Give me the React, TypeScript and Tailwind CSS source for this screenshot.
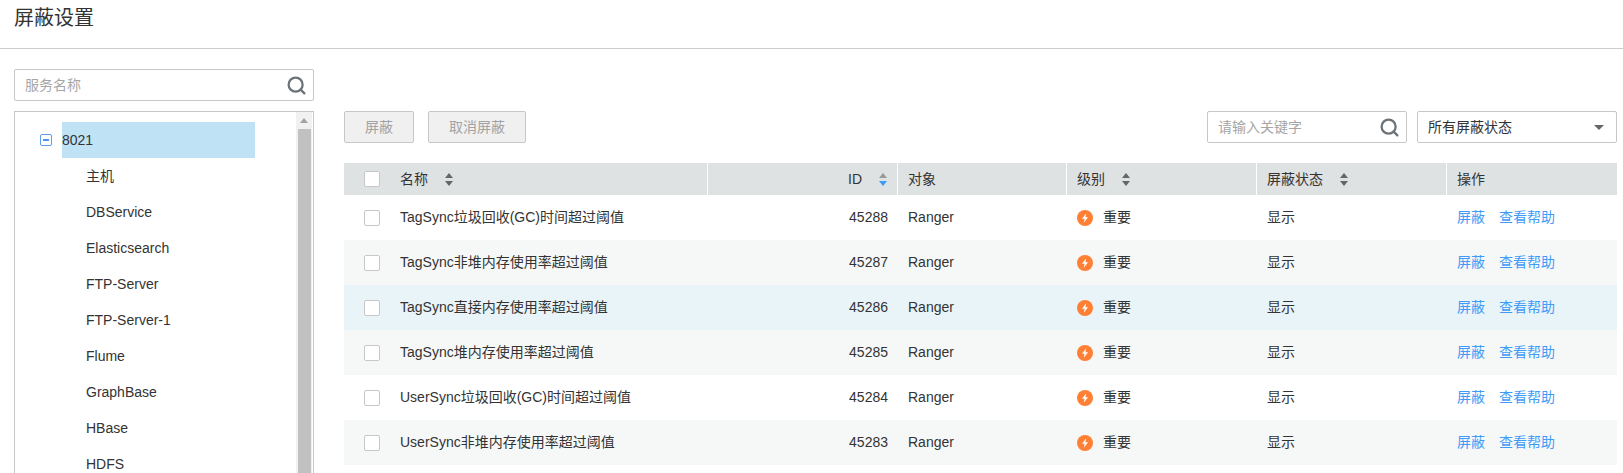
import { Search } from 'lucide-react';

const treeItems = ['主机', 'DBService', 'Elasticsearch', 'FTP-Server', 'FTP-Server-1', 'Flume', 'GraphBase', 'HBase', 'HDFS'];

const rows = [
  { name: 'TagSync垃圾回收(GC)时间超过阈值', id: 45288, bg: 'bg-white' },
  { name: 'TagSync非堆内存使用率超过阈值', id: 45287, bg: 'bg-[#f6f8f8]' },
  { name: 'TagSync直接内存使用率超过阈值', id: 45286, bg: 'bg-[#e9f4f9]' },
  { name: 'TagSync堆内存使用率超过阈值', id: 45285, bg: 'bg-[#f6f8f8]' },
  { name: 'UserSync垃圾回收(GC)时间超过阈值', id: 45284, bg: 'bg-white' },
  { name: 'UserSync非堆内存使用率超过阈值', id: 45283, bg: 'bg-[#f6f8f8]' }
];

function SortIcon({ active }: { active?: boolean }) {
  return (
    <svg width="8" height="13" viewBox="0 0 8 13" className="shrink-0">
      <path d="M4 0L8 5H0z" fill={active ? '#999999' : '#666666'} />
      <path d="M4 13L0 8h8z" fill={active ? '#3f9bf7' : '#666666'} />
    </svg>
  );
}

function Checkbox() {
  return <span className="block w-4 h-4 bg-white border border-[#c7c7c7] rounded-[2px]" />;
}

function BoltIcon() {
  return (
    <svg width="16" height="16" viewBox="0 0 16 16" className="shrink-0">
      <circle cx="8" cy="8" r="8" fill="#ff8034" />
      <path d="M9.2 3.2L5 8.8h2.6l-.8 4 4.2-5.6H8.4z" fill="#ffffff" />
    </svg>
  );
}

export default function App() {
  return (
    <div className="w-[1623px] h-[473px] overflow-hidden bg-white text-[14px] text-[#333333] font-['Liberation_Sans','Noto_Sans_CJK_SC',sans-serif]">
      {/* Title */}
      <div className="h-[49px] border-b border-[#cccccc] pl-[14px] pt-[3px] text-[20px] leading-[30px]">屏蔽设置</div>

      <div className="flex pt-5 pl-[14px] pr-[6px]">
        {/* Left tree */}
        <div className="w-[300px] shrink-0">
          <div className="h-[32px] flex items-center justify-between pl-[10px] pr-[6px] border border-[#c7c7c7] rounded-[2px]">
            <span className="text-[#a6a6a6]">服务名称</span>
            <Search size={21} strokeWidth={2.6} className="text-[#6b7278]" />
          </div>
          <div className="mt-[10px] h-[400px] flex border border-[#c7c7c7]">
            <div className="flex-1 pt-[10px]">
              <div className="flex items-center pl-[25px] h-[36px]">
                <span className="w-3 h-3 mr-[10px] flex items-center justify-center border border-[#5b9df5] rounded-[2px]">
                  <span className="w-[6px] h-[2px] bg-[#4d94f2]" />
                </span>
                <span className="w-[193px] h-[36px] leading-[36px] bg-[#bfe2f5]">8021</span>
              </div>
              {treeItems.map((item) => (
                <div key={item} className="h-[36px] leading-[36px] pl-[71px]">{item}</div>
              ))}
            </div>
            <div className="w-[16px] bg-[#f1f1f1] flex flex-col items-end pr-px mr-px">
              <div className="w-full h-[17px] flex items-center justify-center">
                <span className="border-x-[4px] border-x-transparent border-b-[5px] border-b-[#a3a3a3]" />
              </div>
              <div className="flex-1 w-[13px] bg-[#c1c1c1]" />
            </div>
          </div>
        </div>

        {/* Right content */}
        <div className="flex-1 ml-[30px] pt-[42px]">
          <div className="flex items-center justify-between">
            <div className="flex gap-[14px]">
              <button className="h-[32px] w-[70px] bg-[#f0f0f0] border border-[#c7c7c7] rounded-[2px] text-[#a3a3a3]">屏蔽</button>
              <button className="h-[32px] w-[98px] bg-[#f0f0f0] border border-[#c7c7c7] rounded-[2px] text-[#a3a3a3]">取消屏蔽</button>
            </div>
            <div className="flex gap-[10px]">
              <div className="w-[200px] h-[32px] flex items-center justify-between pl-[10px] pr-[6px] border border-[#c7c7c7] rounded-[2px]">
                <span className="text-[#a6a6a6]">请输入关键字</span>
                <Search size={21} strokeWidth={2.6} className="text-[#6b7278]" />
              </div>
              <div className="w-[200px] h-[32px] flex items-center justify-between pl-[10px] pr-[12px] border border-[#c7c7c7] rounded-[2px]">
                <span>所有屏蔽状态</span>
                <span className="border-x-[5px] border-x-transparent border-t-[5px] border-t-[#666666]" />
              </div>
            </div>
          </div>

          {/* Table */}
          <div className="mt-5">
            <div className="flex h-[32px] items-center bg-[#dfe2e3]">
              <div className="w-[364px] h-full flex items-center border-r border-white">
                <span className="w-[16px] ml-[20px] mr-[20px]"><Checkbox /></span>
                <span>名称</span>
                <span className="ml-[17px]"><SortIcon /></span>
              </div>
              <div className="w-[190px] h-full flex items-center justify-end gap-[17px] pr-[10px] border-r border-white">
                <span>ID</span>
                <SortIcon active />
              </div>
              <div className="w-[169px] h-full flex items-center pl-[10px] border-r border-white">对象</div>
              <div className="w-[190px] h-full flex items-center gap-[17px] pl-[10px] border-r border-white">
                <span>级别</span>
                <SortIcon />
              </div>
              <div className="w-[190px] h-full flex items-center gap-[17px] pl-[10px] border-r border-white">
                <span>屏蔽状态</span>
                <SortIcon />
              </div>
              <div className="flex-1 pl-[10px]">操作</div>
            </div>
            {rows.map((row) => (
              <div key={row.id} className={`flex h-[45px] items-center ${row.bg}`}>
                <div className="w-[364px] flex items-center">
                  <span className="w-[16px] ml-[20px] mr-[20px]"><Checkbox /></span>
                  <span>{row.name}</span>
                </div>
                <div className="w-[190px] text-right pr-[10px]">{row.id}</div>
                <div className="w-[169px] pl-[10px]">Ranger</div>
                <div className="w-[190px] flex items-center gap-[10px] pl-[10px]">
                  <BoltIcon />
                  <span>重要</span>
                </div>
                <div className="w-[190px] pl-[10px]">显示</div>
                <div className="flex-1 pl-[10px] flex gap-[14px] text-[#3f9bf7]">
                  <span>屏蔽</span>
                  <span>查看帮助</span>
                </div>
              </div>
            ))}
          </div>
        </div>
      </div>
    </div>
  );
}
